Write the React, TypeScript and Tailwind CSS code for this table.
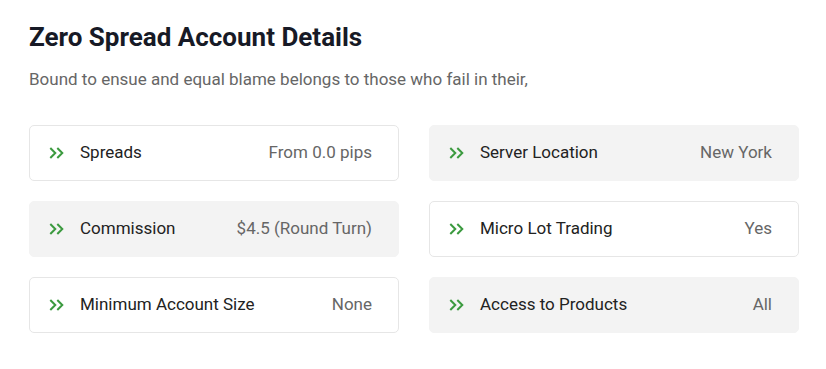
type Detail = {
  label: string;
  value: string;
  shaded: boolean;
};

const details: Detail[] = [
  { label: "Spreads", value: "From 0.0 pips", shaded: false },
  { label: "Server Location", value: "New York", shaded: true },
  { label: "Commission", value: "$4.5 (Round Turn)", shaded: true },
  { label: "Micro Lot Trading", value: "Yes", shaded: false },
  { label: "Minimum Account Size", value: "None", shaded: false },
  { label: "Access to Products", value: "All", shaded: true },
];

const Arrows = () => (
  <svg width="16" height="12" viewBox="0 0 16 12" fill="none" className="shrink-0">
    <path d="M1.3 1l5 5-5 5M8.3 1l5 5-5 5" stroke="#3b9a3f" strokeWidth="2" />
  </svg>
);

const App = () => {
  return (
    <div className="w-[826px] h-[369px] bg-white px-[29px] pt-[20px] font-['Roboto','Liberation_Sans',sans-serif]">
      <h2 className="text-[26px] leading-[34px] font-bold text-[#171a26]">Zero Spread Account Details</h2>
      <p className="mt-[12px] text-[17px] leading-[26px] text-[#666666]">
        Bound to ensue and equal blame belongs to those who fail in their,
      </p>
      <div className="mt-[33px] grid grid-cols-2 gap-x-[30px] gap-y-[20px] w-[770px]">
        {details.map((item) => (
          <div
            key={item.label}
            className={
              item.shaded
                ? "flex items-center h-[56px] pl-[19px] pr-[26px] rounded-[5px] bg-[#f3f3f3] border border-[#f3f3f3]"
                : "flex items-center h-[56px] pl-[19px] pr-[26px] rounded-[5px] bg-white border border-[#e6e6e6]"
            }
          >
            <Arrows />
            <span className="ml-[15px] text-[17px] text-[#222222]">{item.label}</span>
            <span className="ml-auto text-[17px] text-[#666666]">{item.value}</span>
          </div>
        ))}
      </div>
    </div>
  );
};

export default App;
